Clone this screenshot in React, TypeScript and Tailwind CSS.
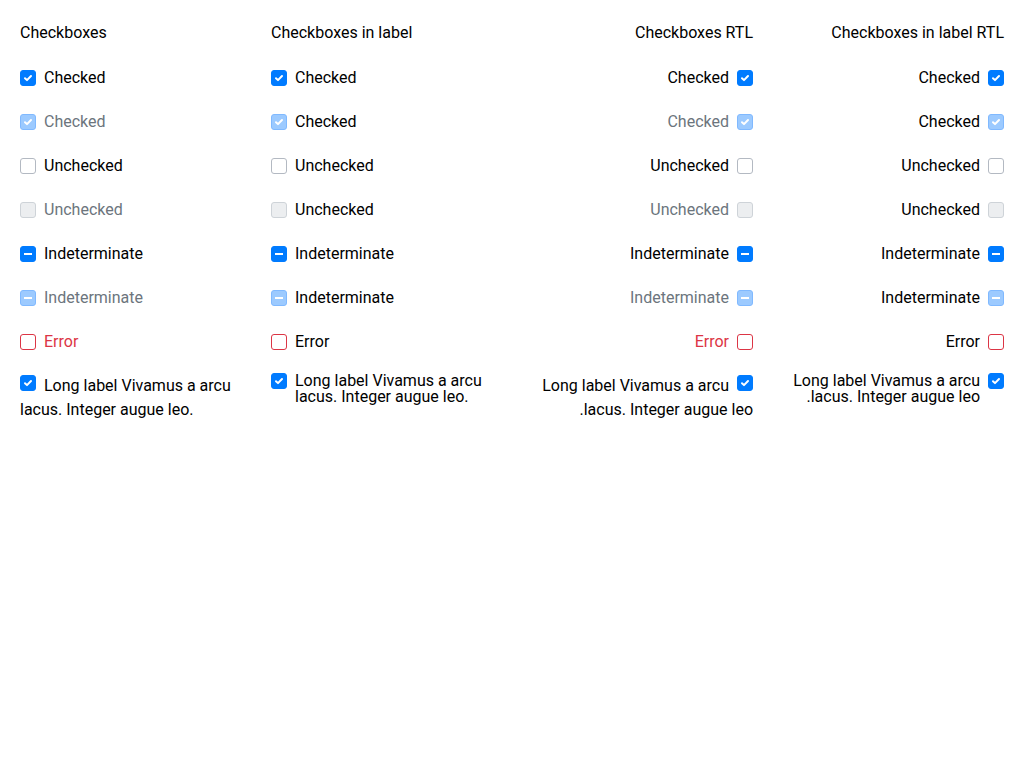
type State = "checked" | "unchecked" | "indeterminate";

type Item = { label: string; state: State; disabled?: boolean; error?: boolean };

const items: Item[] = [
  { label: "Checked", state: "checked" },
  { label: "Checked", state: "checked", disabled: true },
  { label: "Unchecked", state: "unchecked" },
  { label: "Unchecked", state: "unchecked", disabled: true },
  { label: "Indeterminate", state: "indeterminate" },
  { label: "Indeterminate", state: "indeterminate", disabled: true },
  { label: "Error", state: "unchecked", error: true },
];

function Box({ state, disabled, error, inline }: { state: State; disabled?: boolean; error?: boolean; inline?: boolean }) {
  let cls = "bg-white border-[#b3b9c2]";
  if (state !== "unchecked") cls = disabled ? "bg-[#9ccaff] border-[#80b9ff]" : "bg-[#007bff] border-[#007bff]";
  else if (disabled) cls = "bg-[#eceef0] border-[#ced3d8]";
  else if (error) cls = "bg-white border-[#dc3545]";
  return (
    <span
      className={`${inline ? "inline-block align-baseline me-2" : "flex"} w-4 h-4 shrink-0 rounded-[3px] border ${cls}`}
    >
      {state === "checked" && (
        <svg viewBox="0 0 14 14" className="w-full h-full block">
          <path d="M4 7.2 L6 9.1 L10 5" fill="none" stroke="white" strokeWidth="2" strokeLinecap="round" strokeLinejoin="round" />
        </svg>
      )}
      {state === "indeterminate" && (
        <svg viewBox="0 0 14 14" className="w-full h-full block">
          <rect x="3" y="6" width="8" height="2" fill="white" />
        </svg>
      )}
    </span>
  );
}

function Column({ title, rtl, inLabel }: { title: string; rtl?: boolean; inLabel?: boolean }) {
  const long = "Long label Vivamus a arcu lacus. Integer augue leo.";
  return (
    <div dir={rtl ? "rtl" : "ltr"} className="flex flex-col">
      <div className="h-6 leading-6 mb-[21px]">{title}</div>
      {items.map((it, i) => {
        let color = "text-black";
        if (!inLabel && it.disabled) color = "text-[#6c757d]";
        if (!inLabel && it.error) color = "text-[#dc3545]";
        return (
          <div key={i} className="flex items-center gap-2 h-6 mb-5">
            <Box state={it.state} disabled={it.disabled} error={it.error} />
            <span className={color}>{it.label}</span>
          </div>
        );
      })}
      {inLabel ? (
        <label className="flex items-start gap-2 -mt-px">
          <Box state="checked" />
          <span className="leading-4">{long}</span>
        </label>
      ) : (
        <div className="leading-6">
          <Box state="checked" inline />
          {long}
        </div>
      )}
    </div>
  );
}

export default function App() {
  return (
    <div className="min-h-screen bg-white text-black text-base px-5 pt-[21px] pb-5 font-['Roboto',sans-serif]">
      <div className="grid grid-cols-4 gap-x-5">
        <Column title="Checkboxes" />
        <Column title="Checkboxes in label" inLabel />
        <Column title="Checkboxes RTL" rtl />
        <Column title="Checkboxes in label RTL" rtl inLabel />
      </div>
    </div>
  );
}
